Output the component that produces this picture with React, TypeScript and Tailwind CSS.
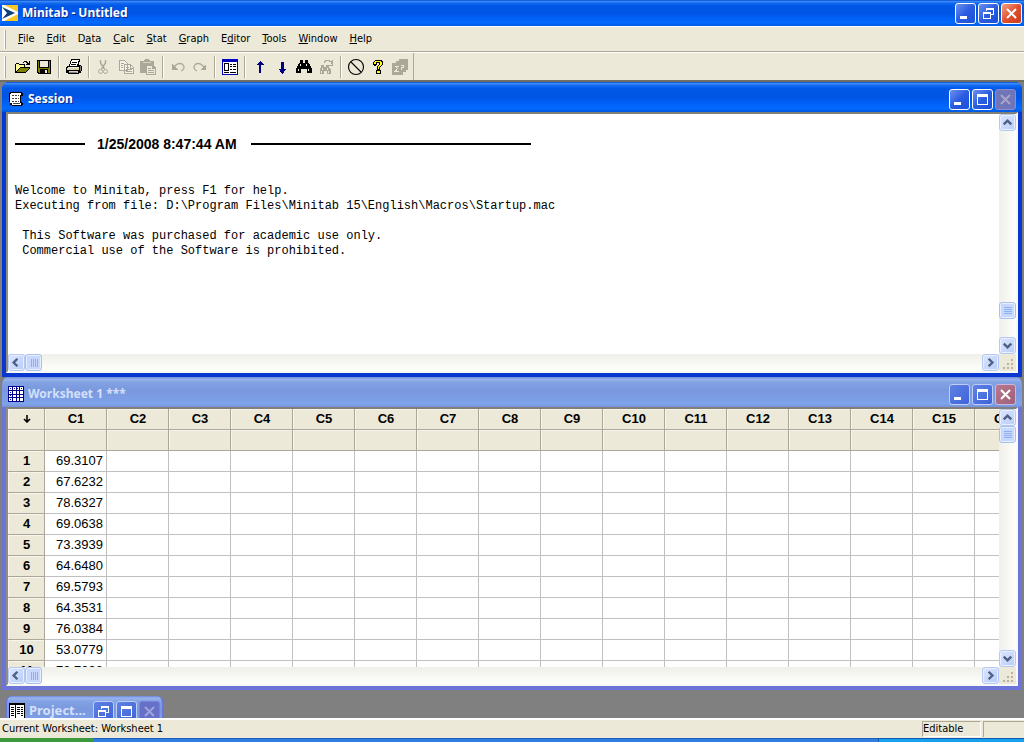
import { ReactNode } from "react";

const menus = [
  ["", "F", "ile"],
  ["", "E", "dit"],
  ["D", "a", "ta"],
  ["", "C", "alc"],
  ["", "S", "tat"],
  ["", "G", "raph"],
  ["E", "d", "itor"],
  ["", "T", "ools"],
  ["", "W", "indow"],
  ["", "H", "elp"],
];

const columns = Array.from({ length: 16 }, (_, i) => `C${i + 1}`);

const data = [
  "69.3107",
  "67.6232",
  "78.6327",
  "69.0638",
  "73.3939",
  "64.6480",
  "69.5793",
  "64.3531",
  "76.0384",
  "53.0779",
  "73.7098",
];

const Icon = ({ children }: { children: ReactNode }) => (
  <svg
    width="18"
    height="18"
    viewBox="0 0 18 18"
    fill="none"
    shapeRendering="crispEdges"
    aria-hidden="true"
  >
    {children}
  </svg>
);

const OpenIcon = () => (
  <Icon>
    <path d="M2 15V6h1V5h3v1h6v3h5v1l-4 5z" fill="#000" />
    <path d="M3 6h3v1h5v2H7L3 13z" fill="#ffff99" />
    <path d="M4 14l3-4h9l-3 4z" fill="#808000" />
    <path d="M10 4h1V3h3v1h1v1h1V3h1v4h-4V6h1V5h-1V4h-2v1h-1z" fill="#000" />
  </Icon>
);

const SaveIcon = () => (
  <Icon>
    <path d="M2 2h14v14H3l-1-1z" fill="#000" />
    <path d="M3 3h1v7h10V3h1v12h-2v-4H5v4H4l-1-1z" fill="#808000" />
    <path d="M5 3h8v6H5z" fill="#ece9d8" />
    <path d="M10 12h2v3h-2z" fill="#ece9d8" />
  </Icon>
);

const PrintIcon = () => (
  <Icon>
    <path d="M6 1h9v1l-1 5h2v1h1v5h-1v2h-2v1H3v-1H1V9h1V8h2V7l2-5z" fill="#000" />
    <path d="M7 2h7l-2 6H5z" fill="#fff" />
    <path d="M7 4h5M6 6h5" stroke="#000" />
    <path d="M3 9.5h11" stroke="#ece9d8" />
    <path d="M2 10h12v2H2zM4 13h9v2H4z" fill="#d8d4c0" />
    <path d="M10 11h2v1h-2z" fill="#d8d800" />
    <path d="M15 8v5M4 14.5h8" stroke="#808080" />
  </Icon>
);

const CutIcon = () => (
  <Icon>
    <g stroke="#aca899" shapeRendering="auto">
      <path d="M5.5 2v3l4 6M10.5 2v3l-4 6" strokeWidth="1.4" />
      <circle cx="5.500" cy="13.5" r="2" />
      <circle cx="10.500" cy="13.5" r="2" />
    </g>
  </Icon>
);

const CopyIcon = () => (
  <Icon>
    <path d="M2.5 2.5h5l3 3v7h-8zM7.5 6.5h6l3 3v6h-9z" fill="#f4f2e8" stroke="#aca899" />
    <path d="M4 5.5h3M4 7.5h2M4 9.5h2M13.5 6v4h3M9 9.5h3M9 11.5h6M9 13.5h6" stroke="#aca899" />
  </Icon>
);

const PasteIcon = () => (
  <Icon>
    <path d="M1 3h4V2h1V1h4v1h1v1h4v12H1z" fill="#aca899" />
    <path d="M4 4.500h8" stroke="#d8d4c4" />
    <path d="M7 7h7l3 3v7H7z" fill="#aca899" />
    <path d="M8 8h5v3h3v5H8z" fill="#ece9d8" />
    <path d="M9 10.5h3M9 12.5h6M9 14.5h6" stroke="#aca899" />
  </Icon>
);

const UndoIcon = () => (
  <Icon>
    <path d="M4 10l3-3c2-2 6-2 7 0 2 2 1 5-2 6" stroke="#aca899" strokeWidth="1.300" shapeRendering="auto" />
    <path d="M3 6v6h6z" fill="#aca899" />
  </Icon>
);

const RedoIcon = () => (
  <Icon>
    <path d="M14 10l-3-3C9 5 5 5 4 7c-2 2-1 5 2 6" stroke="#aca899" strokeWidth="1.300" shapeRendering="auto" />
    <path d="M15 6v6H9z" fill="#aca899" />
  </Icon>
);

const ProjectIcon = () => (
  <Icon>
    <path d="M1 1h16v16H1z" fill="#0000c0" />
    <path d="M2 4h14v12H2z" fill="#fff" />
    <path d="M3.5 5.5h4v7h-4z" stroke="#000" />
    <path d="M9 6.5h2M12 6.5h3M9 8.5h2M12 8.5h3M9 11.5h2M12 11.5h3M3 14.5h5M9 14.5h6" stroke="#000" />
  </Icon>
);

const UpIcon = () => (
  <Icon>
    <path d="M9 3l4 4h-3v8H8V7H5z" fill="#000080" />
  </Icon>
);

const DownIcon = () => (
  <Icon>
    <path d="M8 4h3v7h2l-3 5h-1l-3-5h2z" fill="#000080" />
  </Icon>
);

const FindIcon = () => (
  <Icon>
    <path d="M5 2h3v3h2V2h3v3h1l3 6v4h-5v-4H6v4H1v-4l3-6h1z" fill="#000" />
    <path d="M5.5 6v2M11.5 6v2M3.5 11v2M13.5 11v2" stroke="#ece9d8" />
  </Icon>
);

const FindNextIcon = () => (
  <Icon>
    <path d="M4 7h3v2h2V7h3v2l2 3v4h-4v-3H7v3H3v-4l1-3z" fill="#aca899" />
    <path d="M5.5 10v2M10.5 10v2M4.5 13v2M11.5 13v2" stroke="#ece9d8" />
    <path d="M7.5 5V3.5h1v-1h4v1h2v2M15.5 2v5h-5" stroke="#aca899" />
  </Icon>
);

const CancelIcon = () => (
  <Icon>
    <g stroke="#000" shapeRendering="auto" strokeWidth="1.1">
      <circle cx="9" cy="9" r="7.5" />
      <path d="M4 4l10 10" />
    </g>
  </Icon>
);

const HelpIcon = () => (
  <Icon>
    <path
      d="M6 2h7v1h1v4h-1v1h-1v1h-1v3h1v4H7v-4h1V8h1V7h1V5H8v2H7v1H5V7H4V4h1V3h1z"
      fill="#000"
    />
    <path d="M6 3h6v1h1v3h-1v1h-1v1h-1v2H9V8h1V7h1V4H7v2H5V4h1zM8 13h3v2H8z" fill="#ffff00" />
  </Icon>
);

const StatGuideIcon = () => (
  <Icon>
    <path d="M8 1h9v11h-2v2h-3v3H1V5h4V3h3z" fill="#aca899" />
    <path d="M7.5 8h-3l2 2.5-2 2.5h3M10 7.5h2v2h-2v2" stroke="#ece9d8" />
  </Icon>
);

interface Tool {
  label: string;
  icon: ReactNode;
  off?: boolean;
}

const toolbar: Tool[][] = [
  [
    { label: "Open", icon: <OpenIcon /> },
    { label: "Save", icon: <SaveIcon /> },
  ],
  [{ label: "Print", icon: <PrintIcon /> }],
  [
    { label: "Cut", icon: <CutIcon />, off: true },
    { label: "Copy", icon: <CopyIcon />, off: true },
    { label: "Paste", icon: <PasteIcon />, off: true },
  ],
  [
    { label: "Undo", icon: <UndoIcon />, off: true },
    { label: "Redo", icon: <RedoIcon />, off: true },
  ],
  [{ label: "Project Manager", icon: <ProjectIcon /> }],
  [
    { label: "Previous Command", icon: <UpIcon /> },
    { label: "Next Command", icon: <DownIcon /> },
    { label: "Find", icon: <FindIcon /> },
    { label: "Find Next", icon: <FindNextIcon />, off: true },
  ],
  [
    { label: "Cancel", icon: <CancelIcon /> },
    { label: "Help", icon: <HelpIcon /> },
    { label: "StatGuide", icon: <StatGuideIcon />, off: true },
  ],
];

const LogoIcon = () => (
  <svg width="16" height="16" viewBox="0 0 16 16" aria-hidden="true">
    <path d="M0 0h16v16H0z" fill="#f8c828" />
    <path d="M0 0h2l14 7v2L2 16H0z" fill="#fff" />
    <path d="M0 2l13 6L0 14l5-6z" fill="#10407c" />
  </svg>
);

const SessionIcon = () => (
  <svg width="16" height="16" viewBox="0 0 16 16" fill="none" shapeRendering="crispEdges" aria-hidden="true">
    <path d="M2 1h12v1h1v3h-2v6h1v1h1v2h-1v1H4v-1H2v-3H1V2h1z" fill="#000" />
    <path d="M3 2h10v2h-1v8h1v2H4v-2H2V3h1z" fill="#fff" />
    <path
      d="M4 4.500h2M7 4.500h2M10 4.500h1M4 7.500h2M7 7.500h2M10 7.500h1M4 10.500h2M7 10.500h2M10 10.500h1M5 12.500h7"
      stroke="#404040"
    />
  </svg>
);

const WorksheetIcon = () => (
  <svg width="16" height="16" viewBox="0 0 16 16" fill="none" shapeRendering="crispEdges" aria-hidden="true">
    <path d="M0 0h16v16H0z" fill="#000090" />
    <path
      d="M1 1h3v3H1zM5 1h3v3H5zM9 1h2v3H9zM12 1h3v3h-3zM1 5h3v3H1zM1 9h3v2H1zM1 12h3v3H1zM5 5h3v3H5zM9 5h2v3H9zM12 5h3v3h-3zM5 9h3v2H5zM9 9h2v2H9zM12 9h3v2h-3zM5 12h3v3H5zM9 12h2v3H9zM12 12h3v3h-3z"
      fill="#fff"
    />
    <path d="M2 2.5h1M6 2.5h1M9 2.5h1M13 2.5h1M2 6.5h1M2 9.5h1M2 13.5h1" stroke="#0000c0" />
  </svg>
);

const ManagerIcon = () => (
  <svg width="16" height="16" viewBox="0 0 16 16" fill="none" shapeRendering="crispEdges" aria-hidden="true">
    <path d="M0 0h16v16H0z" fill="#000" />
    <path d="M1 2h5v13H1zM7 2h8v13H7z" fill="#fff" />
    <path
      d="M2 4.5h3M2 6.5h3M2 8.5h3M2 10.5h3M2 12.5h3M8 4.5h3M8 6.5h3M8 8.5h3M8 10.5h3M12 4.5h2M12 6.5h2M12 8.5h2M12 10.5h2M12 12.5h2"
      stroke="#000"
    />
  </svg>
);

type Glyph = "minimize" | "maximize" | "restore" | "close";

const glyphs: Record<Glyph, ReactNode> = {
  minimize: <path d="M4 12h7v3H4z" fill="currentColor" />,
  maximize: <path d="M4 4h11v11H4zM5 7v7h9V7z" fill="currentColor" fillRule="evenodd" />,
  restore: (
    <path
      d="M7 4h8v7h-3v-1h2V6H8v1H7zM4 8h8v7H4zM5 10v4h6v-4z"
      fill="currentColor"
      fillRule="evenodd"
    />
  ),
  close: <path d="M5 5l9 9M14 5l-9 9" stroke="currentColor" strokeWidth="2" shapeRendering="auto" />,
};

const captionStyles = {
  blue: "border-white text-white bg-linear-to-br from-[#6c8ff0] via-[#2a5ce0] to-[#1c50d8]",
  red: "border-white text-white bg-linear-to-br from-[#f0a080] via-[#e05030] to-[#c83c18]",
  disabled: "border-[#8a8ccc] text-[#aaa4c8] bg-[#7074b8]",
  faded: "border-[#c0cdf4] text-white bg-linear-to-br from-[#5f82e4] to-[#3f63d8]",
  fadedRed: "border-[#c8b8dc] text-white bg-linear-to-br from-[#b87890] to-[#a06078]",
  fadedOff: "border-[#7880d8] text-[#a0a4d8] bg-[#6670c8]",
};

const CaptionButton = ({ glyph, tone }: { glyph: Glyph; tone: keyof typeof captionStyles }) => (
  <button
    aria-label={glyph}
    className={`h-[21px] w-[21px] rounded-[3px] border ${captionStyles[tone]}`}
  >
    <svg width="19" height="19" viewBox="0 0 19 19" fill="none" shapeRendering="crispEdges">
      {glyphs[glyph]}
    </svg>
  </button>
);

const arrows = {
  up: "M4 10l4-4 4 4",
  down: "M4 6l4 4 4-4",
  left: "M9 4L5 8l4 4",
  right: "M6 4l4 4-4 4",
};

const ScrollButton = ({ dir }: { dir: keyof typeof arrows }) => (
  <button
    aria-label={`Scroll ${dir}`}
    className="h-[17px] w-[17px] shrink-0 rounded-[3px] border border-[#b4c8f4] bg-linear-to-br from-[#dce6fe] to-[#b8ccf8] shadow-[inset_0_0_0_1px_#e8f0ff]"
  >
    <svg width="15" height="15" viewBox="0 0 16 16" fill="none">
      <path d={arrows[dir]} stroke="#4d6185" strokeWidth="2.6" />
    </svg>
  </button>
);

const Thumb = ({ vertical }: { vertical?: boolean }) => (
  <div className="flex h-[17px] w-[17px] shrink-0 items-center justify-center rounded-[3px] border border-[#a8c0f0] bg-[#c8d8fc] shadow-[inset_0_0_0_1px_#e8f0ff]">
    <svg
      width="8"
      height="8"
      viewBox="0 0 8 8"
      shapeRendering="crispEdges"
      className={vertical ? "" : "rotate-90"}
    >
      <path d="M0 .5h8M0 2.5h8M0 4.5h8M0 6.5h8" stroke="#8cb0f8" />
    </svg>
  </div>
);

const VerticalScroll = ({ atEnd }: { atEnd?: boolean }) => (
  <div className="flex w-[17px] shrink-0 flex-col bg-linear-to-r from-[#f0f0ea] to-[#fefefb]">
    <ScrollButton dir="up" />
    {atEnd && <div className="grow" />}
    <Thumb vertical />
    <div className={atEnd ? "h-[18px]" : "grow"} />
    <ScrollButton dir="down" />
  </div>
);

const HorizontalScroll = () => (
  <div className="flex h-[17px]">
    <div className="flex grow bg-linear-to-b from-[#f0f0ea] to-[#fefefb]">
      <ScrollButton dir="left" />
      <Thumb />
      <div className="grow" />
      <ScrollButton dir="right" />
    </div>
    <div className="flex w-[17px] items-end justify-end bg-[#ece9d8] p-px">
      <svg width="12" height="12" viewBox="0 0 12 12" fill="#b8b4a0" shapeRendering="crispEdges">
        <path d="M8 1h2v2H8zM8 5h2v2H8zM8 9h2v2H8zM4 5h2v2H4zM4 9h2v2H4zM0 9h2v2H0z" />
      </svg>
    </div>
  </div>
);

interface WindowProps {
  title: string;
  icon: ReactNode;
  active?: boolean;
  children: ReactNode;
}

const activeBar =
  "bg-[linear-gradient(to_bottom,#0044c8_0%,#3c8cf8_5%,#1468f0_12%,#0058e6_22%,#0055e5_50%,#0060f8_70%,#026afe_88%,#0058e0_100%)]";
const fadedBar =
  "bg-[linear-gradient(to_bottom,#7088dc_0%,#98b4ec_7%,#82a2e4_18%,#7a98de_45%,#7c9ee6_75%,#7ea4ea_90%,#7890dc_100%)]";

const Window = ({ title, icon, active, children }: WindowProps) => (
  <section className={`rounded-t-[7px] ${active ? "bg-[#0a46e0]" : "bg-[#747cdc]"}`}>
    <header
      className={`flex h-[30px] items-center gap-1 rounded-t-[7px] px-[6px] pt-1 ${
        active ? activeBar : fadedBar
      }`}
    >
      {icon}
      <h2
        className={`grow text-[12px] font-bold ${
          active ? "text-white [text-shadow:1px_1px_#0a2a90]" : "text-[#d4e0fa]"
        }`}
      >
        {title}
      </h2>
      <div className="flex gap-[2px]">
        <CaptionButton glyph="minimize" tone={active ? "blue" : "faded"} />
        <CaptionButton glyph="maximize" tone={active ? "blue" : "faded"} />
        <CaptionButton glyph="close" tone={active ? "disabled" : "fadedRed"} />
      </div>
    </header>
    <div
      className={`border-x-4 border-b-4 ${active ? "border-[#0838d0]" : "border-[#6c74d8]"}`}
    >
      <div className="border-2 border-t-[#808078] border-r-[#f8f8f4] border-b-[#f8f8f4] border-l-[#908e84] bg-white">
        {children}
      </div>
    </div>
  </section>
);

const Session = () => (
  <Window title="Session" icon={<SessionIcon />} active>
    <div className="flex h-[240px]">
      <div className="grow overflow-hidden px-[7px] pt-5 text-black">
        <div className="flex h-5 items-center gap-3">
          <hr className="w-[70px] border-t-2 border-black" />
          <p className="w-[142px] font-['Liberation_Sans'] text-[14px] font-bold">
            1/25/2008 8:47:44 AM
          </p>
          <hr className="w-[280px] border-t-2 border-black" />
        </div>
        <pre className="mt-[30px] font-['Liberation_Mono',monospace] text-[12px] leading-[15px]">
          {"Welcome to Minitab, press F1 for help.\n"}
          {"Executing from file: D:\\Program Files\\Minitab 15\\English\\Macros\\Startup.mac\n\n"}
          {" This Software was purchased for academic use only.\n"}
          {" Commercial use of the Software is prohibited."}
        </pre>
      </div>
      <VerticalScroll atEnd />
    </div>
    <HorizontalScroll />
  </Window>
);

const headCell =
  "h-[21px] border-r border-b border-[#aca899] bg-[#ece9d8] pl-px text-center font-bold shadow-[inset_1px_1px_#f8f6ec]";

const Worksheet = () => (
  <Window title="Worksheet 1 ***" icon={<WorksheetIcon />}>
    <div className="flex h-[258px]">
      <div className="w-0 grow overflow-hidden">
        <table className="w-[1029px] table-fixed border-separate border-spacing-0 font-['Liberation_Sans'] text-[13px] leading-5 text-black">
          <thead>
            <tr>
              <th className={`${headCell} w-[37px]`} aria-label="Entry direction">
                <svg width="8" height="8" viewBox="0 0 8 8" fill="none" className="mx-auto">
                  <path d="M4 0v6M1 4l3 3 3-3" stroke="#000" strokeWidth="1.6" />
                </svg>
              </th>
              {columns.map((col) => (
                <th key={col} scope="col" className={`${headCell} w-[62px]`}>
                  {col}
                </th>
              ))}
            </tr>
            <tr>
              <td className={headCell} />
              {columns.map((col) => (
                <td key={col} className={headCell} />
              ))}
            </tr>
          </thead>
          <tbody>
            {data.map((value, i) => (
              <tr key={i}>
                <th scope="row" className={headCell}>
                  {i + 1}
                </th>
                {columns.map((col, c) => (
                  <td
                    key={col}
                    className="h-[21px] border-r border-b border-[#c0c0c0] pr-[3px] text-right"
                  >
                    {c === 0 ? value : ""}
                  </td>
                ))}
              </tr>
            ))}
          </tbody>
        </table>
      </div>
      <VerticalScroll />
    </div>
    <HorizontalScroll />
  </Window>
);

const App = () => {
  return (
    <div className="flex h-screen flex-col overflow-hidden bg-[#ece9d8] font-['Noto_Sans',sans-serif] text-black">
      {/* Title bar */}
      <header className={`flex h-[26px] shrink-0 items-center gap-1 px-[2px] ${activeBar}`}>
        <LogoIcon />
        <h1 className="grow text-[12px] font-bold text-white [text-shadow:1px_1px_#0a2a90]">
          Minitab - Untitled
        </h1>
        <div className="flex gap-[2px]">
          <CaptionButton glyph="minimize" tone="blue" />
          <CaptionButton glyph="restore" tone="blue" />
          <CaptionButton glyph="close" tone="red" />
        </div>
      </header>

      {/* Menu bar */}
      <nav className="flex h-[26px] shrink-0 items-center border-t border-b border-t-white border-b-[#aca899] pl-1 font-['DejaVu_Sans_Condensed','DejaVu_Sans']">
        <div className="mr-[6px] h-[19px] w-[2px] border-r border-l border-r-[#aca899] border-l-white" />
        {menus.map(([before, key, after]) => (
          <button key={before + key + after} className="px-[6px] text-[11px] leading-4">
            {before}
            <span className="underline">{key}</span>
            {after}
          </button>
        ))}
      </nav>

      {/* Toolbar */}
      <div className="flex h-[28px] shrink-0 border-t border-white">
        <div className="flex items-center border-r border-[#aca899] pr-[2px] pl-1">
          <div className="mr-[5px] h-[22px] w-[2px] border-r border-l border-r-[#aca899] border-l-white" />
          {toolbar.map((group, i) => (
            <div key={i} className="flex items-center">
              {i > 0 && (
                <div className="mx-[3px] h-[22px] w-[2px] border-r border-l border-r-white border-l-[#aca899]" />
              )}
              {group.map(({ label, icon, off }) => (
                <button
                  key={label}
                  aria-label={label}
                  disabled={off}
                  className="flex h-[22px] w-[22px] items-center justify-center"
                >
                  {icon}
                </button>
              ))}
            </div>
          ))}
        </div>
      </div>

      {/* Child windows */}
      <main className="flex min-h-0 grow flex-col overflow-hidden border-t-2 border-[#716f64] bg-[#808080] px-[2px]">
        <Session />
        <Worksheet />
        <section
          className={`mt-[6px] ml-[3px] flex h-[30px] w-[159px] shrink-0 items-center gap-1 rounded-t-[7px] border-x-2 border-[#6c74d8] pr-[2px] pl-[2px] ${fadedBar}`}
        >
          <ManagerIcon />
          <h2 className="w-[60px] text-[13px] font-bold text-[#d4e0fa]">Project...</h2>
          <div className="flex gap-[2px]">
            <CaptionButton glyph="restore" tone="faded" />
            <CaptionButton glyph="maximize" tone="faded" />
            <CaptionButton glyph="close" tone="fadedOff" />
          </div>
        </section>
      </main>

      {/* Status bar */}
      <footer className="flex h-5 shrink-0 items-center gap-[2px] border-t-2 border-white pl-[2px] font-['DejaVu_Sans_Condensed','DejaVu_Sans'] text-[11px] leading-4">
        <p className="grow">Current Worksheet: Worksheet 1</p>
        <p className="w-[59px] border border-t-[#aca899] border-r-white border-b-white border-l-[#aca899] leading-[14px]">
          Editable
        </p>
        <div className="h-4 w-[41px] border-t border-l border-[#aca899]" />
      </footer>

      {/* Taskbar edge */}
      <div className="flex h-1 shrink-0 bg-[#2f7fe0]">
        <div className="w-[94px] rounded-tr-[4px] bg-[#3c9a3c]" />
        <div className="grow border-t border-[#1c5cc0]" />
        <div className="w-[146px] border-t border-l border-[#0c5cb0] bg-[#18a0ec]" />
      </div>
    </div>
  );
};

export default App;
